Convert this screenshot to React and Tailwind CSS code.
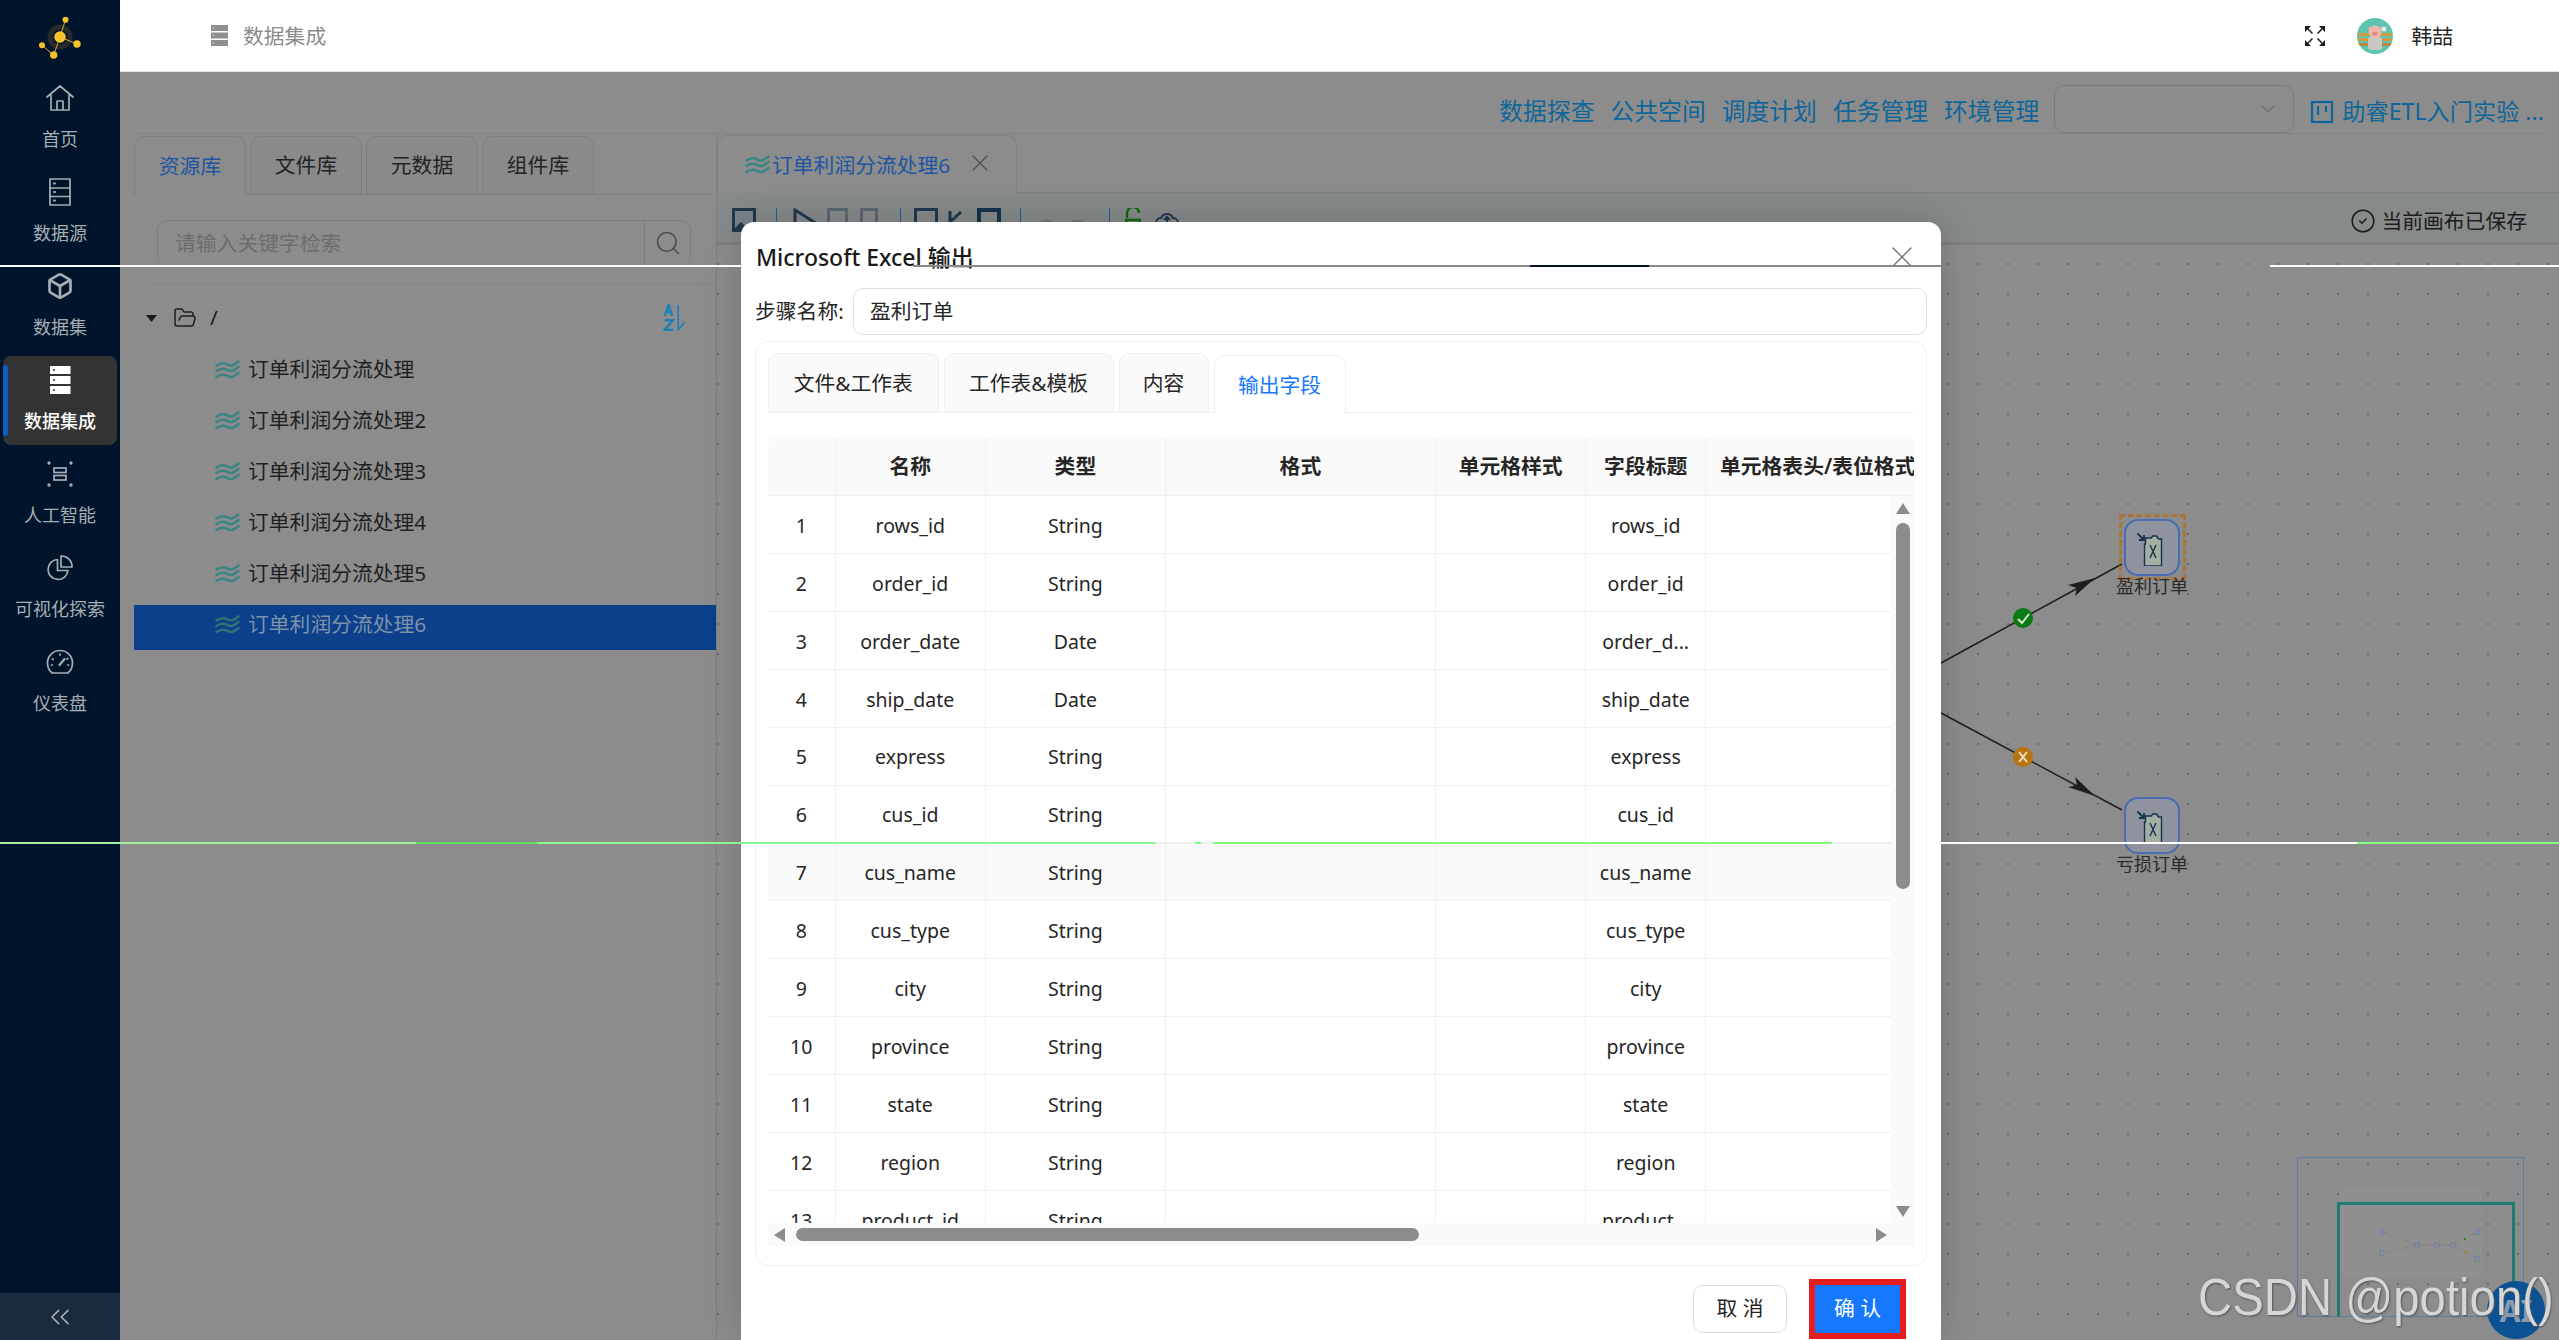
import React from 'react';
import { Box, ChevronDown, ChevronsLeft, CircleCheck, FolderOpen, Search, X } from 'lucide-react';

const stroke = { fill: 'none', stroke: 'currentColor', strokeWidth: 1.7, strokeLinecap: 'round', strokeLinejoin: 'round' };

const HomeIcon = () => (
  <svg width="30" height="30" viewBox="0 0 30 30" {...stroke}>
    <path d="M2 14 15 3l13 11M6 12v15h18V12M12 27v-9h6v9" />
  </svg>
);
const SourceIcon = () => (
  <svg width="24" height="30" viewBox="0 0 24 30" {...stroke}>
    <rect x="2" y="2" width="20" height="26" />
    <path d="M2 11h20M2 19.500h20" />
    <path d="M6 6.500h1M6 15h1M6 23.500h1" strokeWidth="2" />
  </svg>
);
const CubeIcon = () => <Box size={28} strokeWidth={2.3} />;
const ServerIcon = () => (
  <svg width="22" height="28" viewBox="0 0 22 28">
    <rect x="1" y="0" width="20.500" height="8" rx="0.500" fill="#fff" />
    <rect x="1" y="10" width="20.500" height="8" rx="0.500" fill="#fff" />
    <rect x="1" y="20" width="20.500" height="8" rx="0.500" fill="#fff" />
    <circle cx="5" cy="4" r="1" fill="#333" />
    <circle cx="5" cy="14" r="1" fill="#333" />
    <circle cx="5" cy="24" r="1" fill="#333" />
  </svg>
);
const AiIcon = () => (
  <svg width="28" height="28" viewBox="0 0 28 28" fill="none" stroke="currentColor" strokeWidth="1.700">
    <circle cx="3" cy="3" r="1.700" fill="currentColor" stroke="none" />
    <circle cx="25" cy="3" r="1.700" fill="currentColor" stroke="none" />
    <circle cx="3" cy="25" r="1.700" fill="currentColor" stroke="none" />
    <circle cx="25" cy="25" r="1.700" fill="currentColor" stroke="none" />
    <rect x="8" y="8" width="12" height="4.500" />
    <rect x="8" y="15.500" width="12" height="4.500" />
  </svg>
);
const PieIcon = () => (
  <svg width="28" height="28" viewBox="0 0 28 28" {...stroke}>
    <path d="M11.500 5.500a10 10 0 1 0 10.500 11H11.500z" />
    <path d="M15 2a10.500 10.500 0 0 1 11 11H15z" />
  </svg>
);
const GaugeIcon = () => (
  <svg width="28" height="28" viewBox="0 0 28 28" {...stroke}>
    <path d="M6 25h16c3-2.500 4.500-6 4.500-10a12.500 12.500 0 0 0-25 0c0 4 1.500 7.500 4.500 10z" />
    <path d="m13.500 17 5-6" strokeWidth="2.200" />
    <path d="M14 6v1M6.500 11l.7.500M21 11l.7-.500M5.500 17h.8M21.800 17h.8" />
  </svg>
);
const Waves = ({ color = '#3a8583' }) => (
  <svg width="25" height="20" viewBox="0 0 25 20" fill="none" stroke={color} strokeWidth="2.600" strokeLinecap="round" className="shrink-0">
    <path d="M1.500 5.500c4-3 7-3 11-1s6 1 11-3" />
    <path d="M1.500 11c4-3 7-3 11-1s6 1 11-3" />
    <path d="M1.500 17c4-3 7-3 11-1s6 1 11-3" />
  </svg>
);
const Logo = () => (
  <svg width="44" height="44" viewBox="38 14 44 44">
    <circle cx="60" cy="36" r="10" fill="none" stroke="#2a2a2a" strokeWidth="5" />
    <path d="M65.500 18.700 60 36l17 7M60 36l-6.300 18L42 44.300" fill="none" stroke="#d9a62a" strokeWidth="1" />
    <circle cx="60" cy="36" r="5.800" fill="#f7c12e" />
    <circle cx="65.500" cy="18.700" r="3" fill="#f7c12e" />
    <circle cx="77" cy="43" r="3.700" fill="#f7c12e" />
    <circle cx="53.700" cy="54" r="3.700" fill="#f7c12e" />
    <circle cx="42" cy="44.300" r="3" fill="#f7c12e" />
  </svg>
);
const SortIcon = () => (
  <svg width="24" height="28" viewBox="0 0 22 26" fill="none" stroke="#1a80bb" strokeWidth="2.200" className="shrink-0">
    <path d="m1.500 11 3.500-10 3.500 10M3 7.500h4" />
    <path d="M1.500 15h7.500l-7.500 9h8" />
    <path d="M14 1v23l6-7" strokeWidth="1.500" />
  </svg>
);
const FullscreenIcon = () => (
  <svg width="20" height="20" viewBox="0 0 20 20" fill="#1c1c1c" stroke="none">
    <path d="M0 0h6L0 6zM20 0v6l-6-6zM0 20v-6l6 6zM20 20h-6l6-6z" />
    <path d="M3 3l4.500 4.500M17 3l-4.500 4.500M3 17l4.500-4.500M17 17l-4.500-4.500" stroke="#1c1c1c" strokeWidth="1.500" fill="none" />
  </svg>
);
const Avatar = () => (
  <svg width="36" height="36" viewBox="0 0 36 36" className="rounded-full shrink-0">
    <rect width="36" height="36" fill="#5cc4b0" />
    <rect x="1" y="15" width="34" height="3" fill="#cf9a3e" />
    <rect x="1" y="20" width="34" height="3" fill="#cf9a3e" />
    <rect x="1" y="25" width="34" height="3" fill="#b9863a" />
    <rect x="11" y="19" width="14" height="13" rx="3" fill="#c9c9c4" />
    <circle cx="18" cy="14" r="6.500" fill="#edb9ac" />
    <ellipse cx="18" cy="15.500" rx="2.800" ry="2" fill="#d98d82" />
    <path d="M13 8l-2 3 3 0zM23 8l2 3-3 0z" fill="#edb9ac" />
    <circle cx="27" cy="11" r="2.500" fill="#e8e8e8" />
  </svg>
);
const KanbanIcon = () => (
  <svg width="24" height="24" viewBox="0 0 24 24" fill="none" stroke="#0e6699" strokeWidth="2.200" className="shrink-0">
    <rect x="2" y="2" width="20" height="20" />
    <path d="M8 6v9M16 6v6" />
  </svg>
);
const ExcelDoc = () => (
  <svg width="30" height="36" viewBox="0 0 30 36" fill="none" stroke="#17324d" strokeWidth="1.400">
    <path d="M1.500 3.500 8 10M8 5v5H3" strokeWidth="1.800" />
    <path d="M8.500 14h1V8h6l1-2h4l2 3h3v27h-17z" fill="#a3afa2" />
    <path d="m14 15 6 13M20 15l-6 13" />
  </svg>
);

const navItems = [
  ['首页', <HomeIcon />],
  ['数据源', <SourceIcon />],
  ['数据集', <CubeIcon />],
  ['数据集成', <ServerIcon />, true],
  ['人工智能', <AiIcon />],
  ['可视化探索', <PieIcon />],
  ['仪表盘', <GaugeIcon />],
];
const flows = ['订单利润分流处理', '订单利润分流处理2', '订单利润分流处理3', '订单利润分流处理4', '订单利润分流处理5', '订单利润分流处理6'];
const rows = [
  ['1', 'rows_id', 'String', 'rows_id'],
  ['2', 'order_id', 'String', 'order_id'],
  ['3', 'order_date', 'Date', 'order_d...'],
  ['4', 'ship_date', 'Date', 'ship_date'],
  ['5', 'express', 'String', 'express'],
  ['6', 'cus_id', 'String', 'cus_id'],
  ['7', 'cus_name', 'String', 'cus_name'],
  ['8', 'cus_type', 'String', 'cus_type'],
  ['9', 'city', 'String', 'city'],
  ['10', 'province', 'String', 'province'],
  ['11', 'state', 'String', 'state'],
  ['12', 'region', 'String', 'region'],
  ['13', 'product_id', 'String', 'product...'],
];
const cols = 'grid grid-cols-[67.5px_150.4px_180px_270px_150.5px_119.6px_1fr]';

function Sidebar() {
  return (
    <aside className="w-[120px] shrink-0 h-full bg-[#00152b] flex flex-col text-[#a6adb4]">
      <div className="h-[74px] shrink-0 flex items-center justify-center"><Logo /></div>
      {navItems.map(([label, icon, active]) => (
        <div key={label} className={active ? 'relative mx-[3px] h-[89px] mb-[5px] rounded-[8px] bg-[#333333] text-white flex flex-col items-center' : 'mx-[3px] h-[89px] mb-[5px] flex flex-col items-center'}>
          {active && <span className="absolute left-0 top-[9px] h-[71px] w-[5px] rounded-[3px] bg-[#0d5fc0]" />}
          <div className="h-[34px] mt-[7px] flex items-center justify-center">{icon}</div>
          <div className={active ? 'mt-[11px] leading-[26px] text-[18px] font-medium whitespace-nowrap' : 'mt-[11px] leading-[26px] text-[18px] whitespace-nowrap'}>{label}</div>
        </div>
      ))}
      <div className="mt-auto h-[47px] bg-[#1a2b3f] flex items-center justify-center"><ChevronsLeft size={32} strokeWidth={1.200} /></div>
    </aside>
  );
}

function Header() {
  return (
    <header className="h-[72px] shrink-0 bg-white flex items-center pl-[91px] pr-[106px] text-[20.8px] border-b border-[#e4e4e4]">
      <svg width="17" height="21" viewBox="0 0 17 21" className="shrink-0">
        <rect width="17" height="6" fill="#8f8f8f" /><rect y="7.500" width="17" height="6" fill="#8f8f8f" /><rect y="15" width="17" height="6" fill="#8f8f8f" />
        <path d="M2 3h1M2 10.500h1M2 18h1" stroke="#fff" />
      </svg>
      <span className="ml-[15px] pt-[2px] text-[#8c8c8c]">数据集成</span>
      <span className="ml-auto"><FullscreenIcon /></span>
      <span className="ml-[32px]"><Avatar /></span>
      <span className="ml-[18px] pt-[2px] text-[#262626]">韩喆</span>
    </header>
  );
}

function TopLinks() {
  return (
    <div className="h-[62px] shrink-0 ml-[12px] mr-[10px] border-b border-[#838383] flex items-end justify-end pr-[5px] text-[23.8px] text-[#0e6699] leading-none">
      {['数据探查', '公共空间', '调度计划', '任务管理', '环境管理'].map((t) => (
        <span key={t} className="h-[48px] pt-[5px] ml-[16px] flex items-center whitespace-nowrap">{t}</span>
      ))}
      <div className="ml-[15px] h-[48px] w-[240px] rounded-[10px] border border-[#7a7a7a] flex items-center justify-end pr-[14px] text-[#6f6f6f]">
        <ChevronDown size={22} strokeWidth={1.300} />
      </div>
      <span className="h-[48px] pt-[5px] ml-[16px] flex items-center gap-[8px] whitespace-nowrap text-[23.2px]"><KanbanIcon />助睿ETL入门实验 ...</span>
    </div>
  );
}

function LeftPanel() {
  return (
    <div className="w-[585px] shrink-0 ml-[12px] border-r border-[#7e7e7e] flex flex-col pt-[2px] text-[20.8px]">
      <div className="h-[59px] shrink-0 flex items-end gap-[4px] pl-[2px] border-b border-[#808080] -mr-[1px]">
        {['资源库', '文件库', '元数据', '组件库'].map((t, i) => (
          <div key={t} className={i === 0 ? 'w-[112px] h-[59px] -mb-px pt-[2px] rounded-t-[10px] border border-b-0 border-[#7f7f7f] bg-[#8c8c8c] text-[#1e55a3] flex items-center justify-center' : 'w-[112px] h-[58px] pt-[2px] rounded-t-[10px] border border-[#7f7f7f] bg-[#8a8a8a] text-[#232323] flex items-center justify-center'}>{t}</div>
        ))}
      </div>
      <div className="ml-[25px] mt-[25px] w-[534px] h-[46px] shrink-0 rounded-[10px] border border-[#7e7e7e] flex items-center">
        <span className="flex-1 pl-[17px] pt-[2px] text-[#6c6c6c]">请输入关键字检索</span>
        <span className="w-[46px] h-full border-l border-[#7e7e7e] flex items-center justify-center text-[#4a4a4a]"><Search size={28} strokeWidth={1.300} /></span>
      </div>
      <div className="ml-[18px] mt-[17px] border-t border-[#838383]" />
      <div className="pt-[15px] pl-[2px]">
        <div className="h-[45px] mb-[6px] pb-[7px] flex items-center text-[#1f1f1f]">
          <svg width="11" height="7" viewBox="0 0 11 7" className="ml-[12px] shrink-0" fill="#1a1a1a"><path d="M0 0h11L5.500 7z" /></svg>
          <FolderOpen size={24} strokeWidth={1.500} className="ml-[16px]" />
          <span className="ml-[13px]">/</span>
          <span className="ml-auto mr-[29px]"><SortIcon /></span>
        </div>
        {flows.map((t, i) => (
          <div key={t} className={i === 5 ? 'h-[45px] mb-[6px] pb-[6px] pl-[81px] flex items-center gap-[8px] bg-[#0c408a] text-[#7e92ab]' : 'h-[45px] mb-[6px] pb-[6px] pl-[81px] flex items-center gap-[8px] text-[#1f1f1f]'}>
            <Waves color={i === 5 ? '#2f7376' : '#3a8583'} />
            <span>{t}</span>
          </div>
        ))}
      </div>
    </div>
  );
}

function Toolbar() {
  return (
    <div className="h-[52px] shrink-0 bg-[#878a8a] border-b-[3px] border-[#7f7f7f] flex items-start pt-[15px] pl-[15px] pr-[32px]">
      <svg className="shrink-0" width="24" height="24" viewBox="0 0 24 24"><rect x="1.500" y="1.500" width="21" height="21" fill="#78838a" stroke="#22384d" strokeWidth="3" /><path d="M3 20l6-6 5 5 3-2 4 4H3z" fill="#22384d" /></svg>
      <span className="ml-[20px] h-[24px] border-l border-[#1c5ea3]" />
      <svg className="ml-[16px] shrink-0" width="23" height="24" viewBox="0 0 23 24" fill="none" stroke="#22384d" strokeWidth="3"><path d="M2 2 21 14 2 24z" /></svg>
      <span className="ml-[11px] h-[24px] w-[21px] border-[3px] border-[#5b676f] shrink-0" />
      <span className="ml-[12px] h-[24px] w-[18px] border-[3px] border-[#5b676f] shrink-0" />
      <span className="ml-[22px] h-[24px] border-l border-[#1c5ea3]" />
      <span className="ml-[13px] h-[24px] w-[24px] border-[3px] border-[#22384d] shrink-0" />
      <svg className="ml-[8px] shrink-0" width="17" height="24" viewBox="0 0 17 24" fill="none" stroke="#22384d" strokeWidth="3"><path d="M4 24V3M4 14 15 4" /></svg>
      <span className="ml-[14px] h-[24px] w-[24px] border-[4px] border-[#17324d] shrink-0" />
      <span className="ml-[19px] h-[24px] border-l border-[#1c5ea3]" />
      <svg className="ml-[14px] shrink-0" width="54" height="24" viewBox="0 0 54 24" fill="none" stroke="#6f7579" strokeWidth="3"><path d="M3 20a9 9 0 0 1 16-3M51 20a9 9 0 0 0-16-3" /></svg>
      <span className="ml-[20px] h-[24px] border-l border-[#1c5ea3]" />
      <svg className="ml-[15px] shrink-0" width="16" height="24" viewBox="0 0 16 24" fill="none" stroke="#0e6a0e" strokeWidth="2.500"><path d="M2 10V5a6 6 0 0 1 12 0M1 12h14v10H1z" /></svg>
      <svg className="ml-[14px] shrink-0" width="24" height="24" viewBox="0 0 24 24" fill="none" stroke="#22384d" strokeWidth="2"><path d="M6 20a5 5 0 0 1 0-10 6.500 6.500 0 0 1 12 0 5 5 0 0 1 0 10zM12 18v-9M9 12l3-3 3 3" /></svg>
      <span className="ml-auto flex items-center gap-[5px] text-[20.8px] leading-[24px] text-[#1c1c1c]">
        <CircleCheck size={26} strokeWidth={1.400} />当前画布已保存
      </span>
    </div>
  );
}

function Node({ cls, label }) {
  return (
    <div className={`absolute w-[56px] ${cls}`}>
      <div className="h-[57px] rounded-[14px] border-2 border-[#4a6cb0] bg-[#8e939f] flex items-center justify-center pr-[2px]"><ExcelDoc /></div>
      <div className="absolute left-1/2 -translate-x-1/2 top-[54px] text-[18px] leading-[26px] whitespace-nowrap text-[#2a2a2a]">{label}</div>
    </div>
  );
}

function Canvas() {
  return (
    <div className="relative flex-1 bg-[#8c8c8c] bg-[radial-gradient(circle,#6a6a6a_1px,transparent_1.300px)] bg-[size:30px_30px] bg-[position:-14px_4px]">
      <svg className="absolute inset-0" width="1842" height="1095" viewBox="717 245 1842 1095" fill="none">
        <path d="M1941 663 2122 564" stroke="#1e1e1e" strokeWidth="1.500" />
        <path d="M1941 713 2122 810" stroke="#1e1e1e" strokeWidth="1.500" />
        <path d="M2095 578 2068 585 2077 588 2075 596z" fill="#1e1e1e" />
        <path d="M2095 796 2068 787 2077 785 2075 777z" fill="#1e1e1e" />
        <circle cx="2023" cy="618" r="10" fill="#0b7a12" />
        <path d="m2018 619 4 4 7-9" stroke="#d8e8d8" strokeWidth="2" />
        <circle cx="2023" cy="757" r="10" fill="#b8740a" />
        <path d="m2019 752 8 10M2027 752l-8 10" stroke="#e8e0d0" strokeWidth="2" />
      </svg>
      <div className="absolute left-[1402px] top-[269px] w-[67px] h-[66px] border-[3px] border-dashed border-[#a8743a]" />
      <Node cls="left-[1407px] top-[274px]" label="盈利订单" />
      <Node cls="left-[1407px] top-[552px]" label="亏损订单" />
      <div className="absolute left-[1580px] top-[912px] w-[227px] h-[160px] border border-[#5b7ea0]">
        <div className="absolute left-[42px] top-[30px] w-[142px] h-[90px] bg-[#8f8f8f]" />
        <div className="absolute left-[39px] top-[44px] w-[178px] h-[115px] border-[3px] border-b-0 border-[#1f7c72]" />
        <svg className="absolute inset-0" width="225" height="158" viewBox="2298 1158 225 158" fill="none">
          <path d="M2382 1232 2417 1245M2382 1253 2417 1245M2417 1245H2453L2477 1232M2453 1245 2477 1259" stroke="#7a7a7a" strokeWidth="0.500" />
          <path d="M2380 1230h4v4h-4zM2380 1251h4v4h-4zM2415 1243h4v4h-4zM2435 1243h4v4h-4zM2451 1243h4v4h-4zM2475 1230h4v4h-4zM2475 1257h4v4h-4z" fill="#8e939f" stroke="#4a6cb0" strokeWidth="0.500" />
          <circle cx="2465" cy="1239" r="1" fill="#0b7a12" />
          <circle cx="2465" cy="1252" r="1" fill="#b8740a" />
        </svg>
      </div>
    </div>
  );
}

function RightPanel() {
  return (
    <div className="flex-1 min-w-0 flex flex-col">
      <div className="h-[59px] shrink-0 border-b border-[#808080] flex items-end">
        <div className="w-[300px] h-[58px] -mb-px rounded-t-[10px] border border-b-0 border-[#7f7f7f] bg-[#8c8c8c] pl-[27px] flex items-center text-[20.8px] text-[#1e55a3]">
          <Waves />
          <span className="ml-[2px] pt-[2px] whitespace-nowrap">订单利润分流处理6</span>
          <X size={28} strokeWidth={1.100} className="ml-[16px] text-[#4f4f4f] -mt-[4px]" />
        </div>
      </div>
      <Toolbar />
      <Canvas />
    </div>
  );
}

function DataTable() {
  return (
    <div className="mt-[24px] h-[809px] rounded-t-[8px] overflow-hidden text-[20.8px] text-[#262626]">
      <div className={`${cols} h-[59px] bg-[#fafafa] border-b-[1.500px] border-[#f0f0f0] font-semibold`}>
        {['', '名称', '类型', '格式', '单元格样式', '字段标题', '单元格表头/表位格式'].map((h, i) => (
          <div key={i} className={i < 6 ? 'pt-[2px] flex items-center justify-center border-r border-[#f0f0f0] whitespace-nowrap' : 'pt-[2px] flex items-center pl-[14px] whitespace-nowrap overflow-hidden'}>{h}</div>
        ))}
      </div>
      <div className="flex h-[727px]">
        <div className="flex-1 min-w-0 overflow-hidden text-[19.5px]">
          {rows.map((r) => (
            <div key={r[0]} className={r[0] === '7' ? `${cols} h-[57.920px] shrink-0 border-b-[1.500px] border-[#f0f0f0] bg-[#fafafa]` : `${cols} h-[57.920px] shrink-0 border-b-[1.500px] border-[#f0f0f0]`}>
              <div className="pt-[2px] flex items-center justify-center border-r border-[#f0f0f0]">{r[0]}</div>
              <div className="pt-[2px] flex items-center justify-center border-r border-[#f0f0f0]">{r[1]}</div>
              <div className="pt-[2px] flex items-center justify-center border-r border-[#f0f0f0]">{r[2]}</div>
              <div className="border-r border-[#f0f0f0]" />
              <div className="border-r border-[#f0f0f0]" />
              <div className="pt-[2px] flex items-center justify-center border-r border-[#f0f0f0] whitespace-nowrap">{r[3]}</div>
              <div />
            </div>
          ))}
        </div>
        <div className="w-[23px] shrink-0 bg-[#fafafa] flex flex-col items-center pt-[7px] pb-[6px]">
          <span className="block w-0 h-0 border-x-[7px] border-x-transparent border-b-[11px] border-b-[#8c8c8c]" />
          <span className="mt-[9px] w-[14px] h-[366px] rounded-[7px] bg-[#8c8c8c]" />
          <span className="mt-auto block w-0 h-0 border-x-[7px] border-x-transparent border-t-[11px] border-t-[#8c8c8c]" />
        </div>
      </div>
      <div className="h-[23px] bg-[#fafafa] flex items-center pl-[5.500px]">
        <span className="block w-0 h-0 border-y-[7px] border-y-transparent border-r-[11px] border-r-[#8c8c8c]" />
        <span className="ml-[11px] w-[623px] h-[13px] rounded-[7px] bg-[#8c8c8c]" />
        <span className="ml-[457px] block w-0 h-0 border-y-[7px] border-y-transparent border-l-[11px] border-l-[#8c8c8c]" />
      </div>
    </div>
  );
}

function Modal() {
  return (
    <div className="absolute left-[741px] top-[222px] w-[1200px] h-[1118px] rounded-t-[13px] bg-white shadow-[0_0_40px_rgba(0,0,0,0.18)] flex flex-col text-[20.8px] text-[#262626]">
      <div className="h-[66px] shrink-0 pt-[4px] pl-[15px] pr-[21px] flex items-center justify-between">
        <span className="text-[23px] font-medium text-[#1a1a1a]">Microsoft Excel 输出</span>
        <X size={36} strokeWidth={0.900} className="text-[#6f6f6f]" />
      </div>
      <div className="mx-[14px] h-[47px] shrink-0 flex items-center">
        <span className="w-[98px] shrink-0 text-[#262626] whitespace-nowrap">步骤名称:</span>
        <div className="flex-1 h-full rounded-[10px] border-[1.500px] border-[#e0e0e0] pl-[16px] flex items-center">盈利订单</div>
      </div>
      <div className="mx-[14px] mt-[6px] h-[925px] shrink-0 rounded-[13px] border border-[#f0f0f0] px-[12px] pt-[12px]">
        <div className="h-[59px] flex items-end gap-[5px] border-b-[1.500px] border-[#f0f0f0]">
          {[['文件&工作表', 'w-[170.500px]'], ['工作表&模板', 'w-[170px]'], ['内容', 'w-[90px]']].map(([t, w]) => (
            <div key={t} className={`${w} h-[59px] pt-[2px] rounded-t-[10px] border-[1.500px] border-[#f0f0f0] bg-[#fafafa] flex items-center justify-center`}>{t}</div>
          ))}
          <div className="w-[132px] h-[59px] -mb-[1.500px] pt-[2px] rounded-t-[10px] border-[1.500px] border-b-0 border-[#f0f0f0] bg-white text-[#1677ff] flex items-center justify-center">输出字段</div>
        </div>
        <DataTable />
      </div>
      <div className="mt-[19px] pr-[41px] flex justify-end gap-[28px]">
        <div className="w-[94px] h-[48px] rounded-[10px] border-[1.500px] border-[#d9d9d9] flex items-center justify-center">取 消</div>
        <div className="w-[85px] h-[48px] bg-[#1677ff] text-white outline-[6px] outline-solid outline-[#e81e1e] flex items-center justify-center">确 认</div>
      </div>
    </div>
  );
}

function ScanLines() {
  return (
    <>
      <div className="absolute top-[265px] left-0 w-[741px] h-[1.500px] bg-white" />
      <div className="absolute top-[265px] left-[913px] w-[617px] h-[1.500px] bg-[#8a8a8a]" />
      <div className="absolute top-[265px] left-[1530px] w-[119px] h-[1.500px] bg-[#00152b]" />
      <div className="absolute top-[265px] left-[1649px] w-[292px] h-[1.500px] bg-[#8a8a8a]" />
      <div className="absolute top-[265px] left-[2270px] w-[289px] h-[1.500px] bg-white" />
      <div className="absolute top-[842px] left-0 w-[416px] h-[1.500px] bg-[#a0f0a0]" />
      <div className="absolute top-[842px] left-[416px] w-[121px] h-[1.500px] bg-[#5fe05f]" />
      <div className="absolute top-[842px] left-[537px] w-[619px] h-[1.500px] bg-[#90f590]" />
      <div className="absolute top-[842px] left-[1156px] w-[39px] h-[1.500px] bg-[#eeeeee]" />
      <div className="absolute top-[842px] left-[1195px] w-[6px] h-[1.500px] bg-[#80ff80]" />
      <div className="absolute top-[842px] left-[1201px] w-[12px] h-[1.500px] bg-[#eeeeee]" />
      <div className="absolute top-[842px] left-[1213px] w-[619px] h-[1.500px] bg-[#80ff80]" />
      <div className="absolute top-[842px] left-[1832px] w-[60px] h-[1.500px] bg-[#eeeeee]" />
      <div className="absolute top-[842px] left-[1941px] w-[416px] h-[1.500px] bg-white" />
      <div className="absolute top-[842px] left-[2357px] w-[202px] h-[1.500px] bg-[#80ff80]" />
    </>
  );
}

export default function App() {
  return (
    <div className="relative w-[2559px] h-[1340px] overflow-hidden flex bg-[#8c8c8c] font-['Noto_Sans','Noto_Sans_CJK_SC',sans-serif]">
      <Sidebar />
      <div className="flex-1 min-w-0 flex flex-col">
        <Header />
        <TopLinks />
        <div className="flex-1 min-h-0 flex">
          <LeftPanel />
          <RightPanel />
        </div>
      </div>
      <Modal />
      <ScanLines />
      <div className="absolute left-[2487px] top-[1281px] w-[58px] h-[58px] rounded-full bg-[#0c5293] flex items-center justify-center text-[30px] font-bold text-[#8c9cae]">AI</div>
      <div className="absolute left-[2198px] top-[1262px] origin-left scale-x-[0.91] text-[52px] leading-[70px] whitespace-nowrap text-[#d6d6d6] font-['Liberation_Sans',sans-serif] [text-shadow:1px_1px_2px_#555]">CSDN @potion()</div>
    </div>
  );
}
